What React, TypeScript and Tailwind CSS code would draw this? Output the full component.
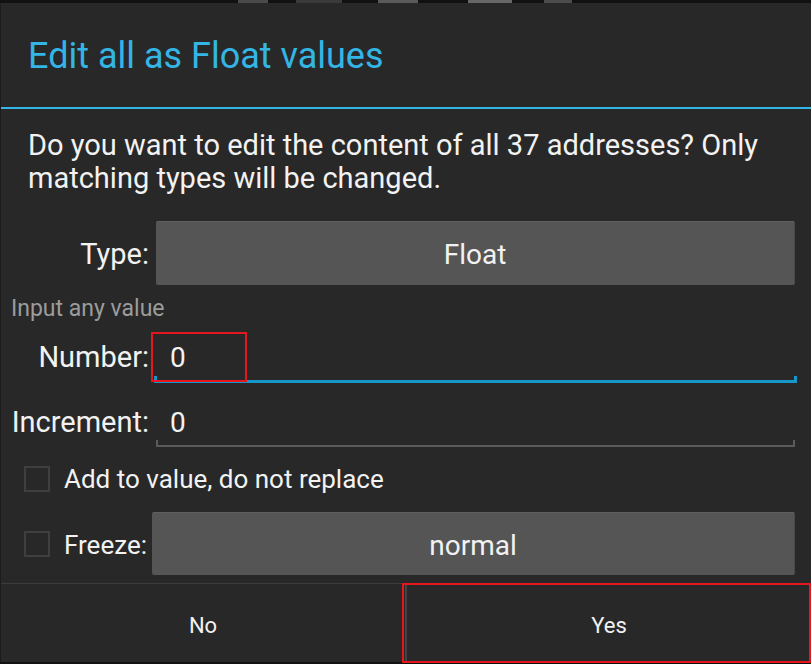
export default function App() {
  return (
    <div className="relative w-[811px] h-[664px] overflow-hidden bg-[#111111] flex flex-col font-['Roboto',sans-serif]">
      {/* background strip above the dialog */}
      <div className="h-[3px] flex">
        <div className="ml-[238px] w-[30px] h-full bg-[#4a4a4a]" />
        <div className="ml-[28px] w-[46px] h-full bg-[#3a3a3a]" />
        <div className="ml-[36px] w-[40px] h-full bg-[#5a5a5a]" />
        <div className="ml-[50px] w-[44px] h-full bg-[#666666]" />
        <div className="ml-[32px] w-[28px] h-full bg-[#4c4c4c]" />
      </div>

      {/* dialog */}
      <div className="h-[659px] flex flex-col bg-[#282828] border-l border-[#1c1c1c]">
        <div className="h-[104px] flex items-center pl-[27px] pt-[2px] text-[36px] leading-none text-[#33b5e5]">
          Edit all as Float values
        </div>
        <div className="h-[2px] bg-[#33b5e5]" />

        <div className="px-[27px] pt-[20px] text-[29px] leading-[33px] text-[#f2f2f2]">
          Do you want to edit the content of all 37 addresses? Only matching types will be changed.
        </div>

        {/* Type row */}
        <div className="mt-[26px] h-[64px] flex items-center text-[#f2f2f2]">
          <div className="w-[148px] pt-[2px] text-right text-[29px] leading-[33px]">Type:</div>
          <div className="ml-auto mr-[16px] w-[639px] h-full flex items-center justify-center pt-[3px] bg-[#555555] border-t border-[#606060] border-r border-r-[#4a4a4a] rounded-[2px] text-[28px]">
            Float
          </div>
        </div>

        <div className="mt-[11px] pl-[10px] text-[23px] leading-[26px] text-[#9c9c9c]">Input any value</div>

        {/* Number row */}
        <div className="mt-[19px] flex text-[#f2f2f2]">
          <div className="w-[148px] text-right text-[29px] leading-[33px]">Number:</div>
          <div className="ml-[5px] mr-[14px] flex-1 flex flex-col">
            <div className="pl-[16px] text-[28px] leading-[33px]">0</div>
            <div className="mt-[2px] h-[7px] border-x-[3px] border-b-[3px] border-[#1797c9]" />
          </div>
        </div>

        {/* Increment row */}
        <div className="mt-[23px] flex text-[#f2f2f2]">
          <div className="w-[148px] text-right text-[29px] leading-[33px]">Increment:</div>
          <div className="ml-[7px] mr-[16px] flex-1 flex flex-col">
            <div className="pl-[14px] text-[28px] leading-[33px]">0</div>
            <div className="mt-[1px] h-[7px] border-x-2 border-b-2 border-[#5a5a5a]" />
          </div>
        </div>

        {/* Add to value checkbox */}
        <div className="mt-[19px] h-[26px] flex items-center pl-[23px] text-[#f2f2f2]">
          <div className="w-[26px] h-[26px] border-2 border-[#3f3f3f]" />
          <div className="ml-[14px] text-[26px] leading-[30px]">Add to value, do not replace</div>
        </div>

        {/* Freeze row */}
        <div className="mt-[20px] h-[63px] flex items-center pl-[23px] text-[#f2f2f2]">
          <div className="w-[26px] h-[26px] border-2 border-[#3f3f3f]" />
          <div className="ml-[14px] pt-[3px] text-[26px] leading-[30px]">Freeze:</div>
          <div className="ml-auto mr-[16px] w-[643px] h-full flex items-center justify-center pt-[3px] bg-[#555555] border-t border-[#606060] border-r border-r-[#4a4a4a] rounded-[2px] text-[28px]">
            normal
          </div>
        </div>

        <div className="flex-1" />
        <div className="h-px bg-[#3c3c3c]" />

        {/* bottom buttons */}
        <div className="h-[78px] flex text-[22px] text-[#f2f2f2]">
          <div className="w-[404px] flex items-center justify-center pt-[5px]">No</div>
          <div className="w-[2px] bg-[#444444]" />
          <div className="flex-1 flex items-center justify-center pt-[5px]">Yes</div>
        </div>
      </div>

      {/* red annotation boxes */}
      <div className="absolute left-[151px] top-[332px] w-[96px] h-[50px] border-2 border-[#e5161e]" />
      <div className="absolute left-[402px] top-[583px] w-[409px] h-[80px] border-2 border-[#e5161e]" />
    </div>
  );
}
